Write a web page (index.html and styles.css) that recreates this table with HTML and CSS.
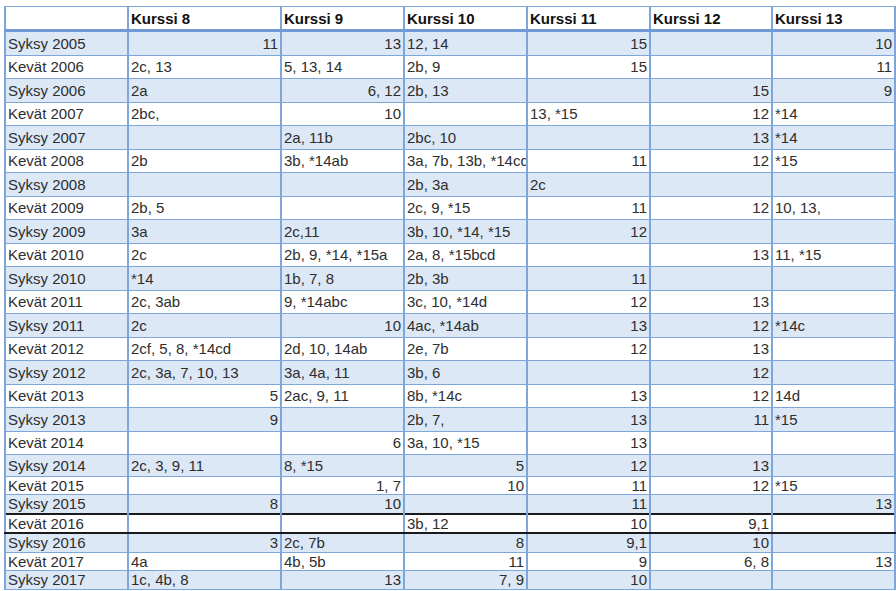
FILE: index.html
```html
<!DOCTYPE html>
<html lang="fi">
<head>
<meta charset="utf-8">
<title>Kurssit</title>
<link rel="stylesheet" href="styles.css">
</head>
<body>
<table class="grid">
<colgroup>
<col class="c0"><col class="c1"><col class="c2"><col class="c3"><col class="c4"><col class="c5"><col class="c6">
</colgroup>
<thead>
<tr><th></th><th>Kurssi 8</th><th>Kurssi 9</th><th>Kurssi 10</th><th>Kurssi 11</th><th>Kurssi 12</th><th>Kurssi 13</th></tr>
</thead>
<tbody>
<tr class="alt"><td>Syksy 2005</td><td class="r">11</td><td class="r">13</td><td>12, 14</td><td class="r">15</td><td></td><td class="r">10</td></tr>
<tr><td>Kevät 2006</td><td>2c, 13</td><td>5, 13, 14</td><td>2b, 9</td><td class="r">15</td><td></td><td class="r">11</td></tr>
<tr class="alt"><td>Syksy 2006</td><td>2a</td><td class="r">6, 12</td><td>2b, 13</td><td></td><td class="r">15</td><td class="r">9</td></tr>
<tr><td>Kevät 2007</td><td>2bc,</td><td class="r">10</td><td></td><td>13, *15</td><td class="r">12</td><td>*14</td></tr>
<tr class="alt"><td>Syksy 2007</td><td></td><td>2a, 11b</td><td>2bc, 10</td><td></td><td class="r">13</td><td>*14</td></tr>
<tr><td>Kevät 2008</td><td>2b</td><td>3b, *14ab</td><td>3a, 7b, 13b, *14cd</td><td class="r">11</td><td class="r">12</td><td>*15</td></tr>
<tr class="alt"><td>Syksy 2008</td><td></td><td></td><td>2b, 3a</td><td>2c</td><td></td><td></td></tr>
<tr><td>Kevät 2009</td><td>2b, 5</td><td></td><td>2c, 9, *15</td><td class="r">11</td><td class="r">12</td><td>10, 13,</td></tr>
<tr class="alt"><td>Syksy 2009</td><td>3a</td><td>2c,11</td><td>3b, 10, *14, *15</td><td class="r">12</td><td></td><td></td></tr>
<tr><td>Kevät 2010</td><td>2c</td><td>2b, 9, *14, *15a</td><td>2a, 8, *15bcd</td><td></td><td class="r">13</td><td>11, *15</td></tr>
<tr class="alt"><td>Syksy 2010</td><td>*14</td><td>1b, 7, 8</td><td>2b, 3b</td><td class="r">11</td><td></td><td></td></tr>
<tr><td>Kevät 2011</td><td>2c, 3ab</td><td>9, *14abc</td><td>3c, 10, *14d</td><td class="r">12</td><td class="r">13</td><td></td></tr>
<tr class="alt"><td>Syksy 2011</td><td>2c</td><td class="r">10</td><td>4ac, *14ab</td><td class="r">13</td><td class="r">12</td><td>*14c</td></tr>
<tr><td>Kevät 2012</td><td>2cf, 5, 8, *14cd</td><td>2d, 10, 14ab</td><td>2e, 7b</td><td class="r">12</td><td class="r">13</td><td></td></tr>
<tr class="alt"><td>Syksy 2012</td><td>2c, 3a, 7, 10, 13</td><td>3a, 4a, 11</td><td>3b, 6</td><td></td><td class="r">12</td><td></td></tr>
<tr><td>Kevät 2013</td><td class="r">5</td><td>2ac, 9, 11</td><td>8b, *14c</td><td class="r">13</td><td class="r">12</td><td>14d</td></tr>
<tr class="alt"><td>Syksy 2013</td><td class="r">9</td><td></td><td>2b, 7,</td><td class="r">13</td><td class="r">11</td><td>*15</td></tr>
<tr><td>Kevät 2014</td><td></td><td class="r">6</td><td>3a, 10, *15</td><td class="r">13</td><td></td><td></td></tr>
<tr class="alt last-tall"><td>Syksy 2014</td><td>2c, 3, 9, 11</td><td>8, *15</td><td class="r">5</td><td class="r">12</td><td class="r">13</td><td></td></tr>
<tr class="compact"><td>Kevät 2015</td><td></td><td class="r">1, 7</td><td class="r">10</td><td class="r">11</td><td class="r">12</td><td>*15</td></tr>
<tr class="alt compact"><td>Syksy 2015</td><td class="r">8</td><td class="r">10</td><td></td><td class="r">11</td><td></td><td class="r">13</td></tr>
<tr class="compact marked"><td>Kevät 2016</td><td></td><td></td><td>3b, 12</td><td class="r">10</td><td class="r">9,1</td><td></td></tr>
<tr class="alt compact"><td>Syksy 2016</td><td class="r">3</td><td>2c, 7b</td><td class="r">8</td><td class="r">9,1</td><td class="r">10</td><td></td></tr>
<tr class="compact"><td>Kevät 2017</td><td>4a</td><td>4b, 5b</td><td class="r">11</td><td class="r">9</td><td class="r">6, 8</td><td class="r">13</td></tr>
<tr class="alt compact"><td>Syksy 2017</td><td>1c, 4b, 8</td><td class="r">13</td><td class="r">7, 9</td><td class="r">10</td><td></td><td></td></tr>
</tbody>
</table>
</body>
</html>
```
FILE: styles.css
```css
html, body {
  margin: 0;
  padding: 0;
  background: #ffffff;
}

body {
  font-family: "Liberation Sans", Arial, sans-serif;
  font-size: 15px;
  color: #2e2e2e;
}

.grid {
  border-collapse: collapse;
  table-layout: fixed;
  width: 890px;
  margin: 6px 0 0 4px;
}

.c0 { width: 123px; }
.c1 { width: 153px; }
.c2 { width: 123px; }
.c3 { width: 123px; }
.c4 { width: 123px; }
.c5 { width: 122px; }
.c6 { width: 123px; }

.grid th,
.grid td {
  border-top: 1px solid #7ea6d9;
  border-bottom: 1px solid #7ea6d9;
  border-left: 2px solid #7ea6d9;
  border-right: 2px solid #7ea6d9;
  padding: 0 2px 0 2px;
  white-space: nowrap;
  overflow: hidden;
  text-align: left;
  line-height: 17px;
}

.grid th {
  height: 21px;
  font-weight: bold;
  color: #111111;
  border-bottom: 3px solid #6f9ad3;
  vertical-align: middle;
  padding-top: 1px;
}

.grid td {
  height: 22.5px;
  vertical-align: middle;
}

.grid td.r {
  text-align: right;
}

.grid tr.alt td {
  background: #dce8f6;
}

.grid tr.last-tall td {
  height: 20.5px;
}

.grid tr.compact td {
  height: 17.5px;
}

.grid tr.marked td {
  border-top: 2px solid #1a1a1a;
  border-bottom: 2px solid #1a1a1a;
}
```
